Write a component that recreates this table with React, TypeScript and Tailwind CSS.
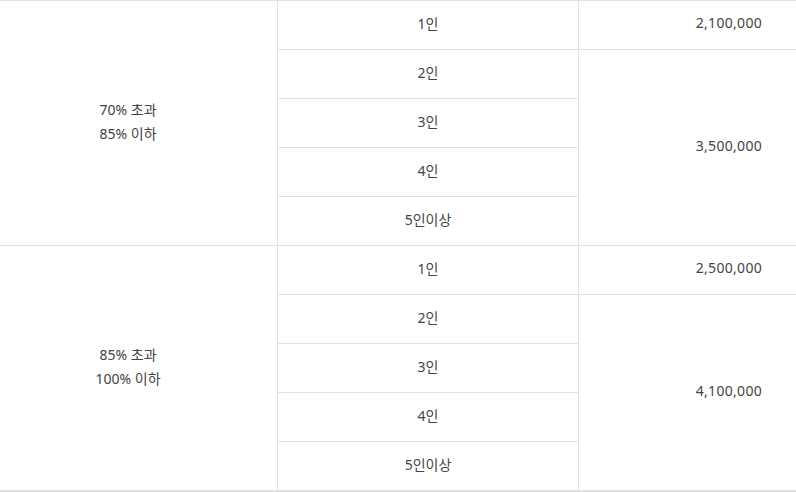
const groups = [
  {
    range: ['70% 초과', '85% 이하'],
    first: '2,100,000',
    rest: '3,500,000',
  },
  {
    range: ['85% 초과', '100% 이하'],
    first: '2,500,000',
    rest: '4,100,000',
  },
];

const people = ['1인', '2인', '3인', '4인', '5인이상'];

export default function App() {
  return (
    <div
      className="w-[796px] bg-white text-[14px] text-[#444] border-t border-[#e1e1e1]"
      style={{ fontFamily: '"Noto Sans", "Noto Sans CJK KR", sans-serif' }}
    >
      {groups.map((g, gi) => (
        <div
          key={gi}
          className={`flex border-[#e1e1e1] ${gi === groups.length - 1 ? 'border-b-2' : 'border-b'}`}
        >
          {/* 소득 구간 */}
          <div className="w-[278px] border-r border-[#e1e1e1] flex flex-col items-center justify-center pr-[21px] pb-[2px] leading-[24px]">
            {g.range.map((r) => (
              <span key={r}>{r}</span>
            ))}
          </div>

          {/* 가구원 수 */}
          <div className="w-[301px] border-r border-[#e1e1e1] flex flex-col">
            {people.map((p, i) => (
              <div
                key={p}
                className={`h-[48px] pb-[4px] flex items-center justify-center ${i < people.length - 1 ? 'border-b border-[#e1e1e1] h-[49px]' : ''}`}
              >
                {p}
              </div>
            ))}
          </div>

          {/* 금액 */}
          <div className="flex-1 flex flex-col">
            <div className="h-[49px] pb-[5px] border-b border-[#e1e1e1] flex items-center justify-end pr-[34px] tracking-[0.3px]">
              {g.first}
            </div>
            <div className="flex-1 pb-[5px] flex items-center justify-end pr-[34px] tracking-[0.3px]">
              {g.rest}
            </div>
          </div>
        </div>
      ))}
    </div>
  );
}
